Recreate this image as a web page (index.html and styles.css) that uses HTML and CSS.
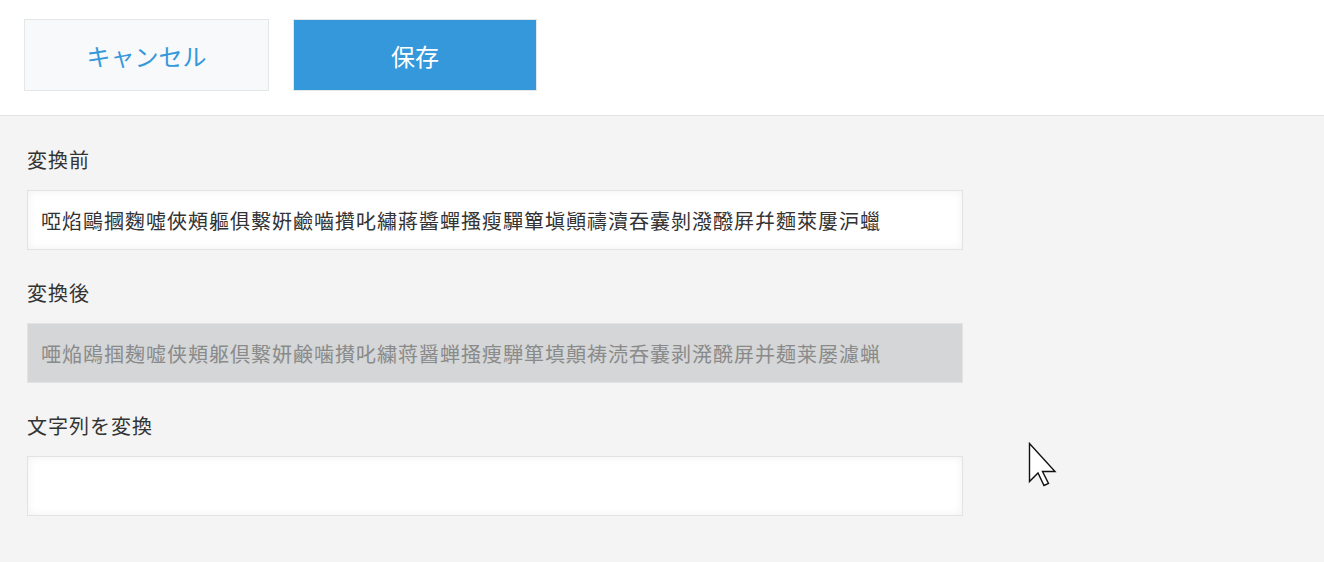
FILE: index.html
```html
<!DOCTYPE html>
<html lang="ja">
<head>
    <meta charset="UTF-8">
    <title>文字列を変換</title>
    <link rel="stylesheet" href="styles.css">
</head>
<body>
    <div class="toolbar">
        <button class="btn btn-cancel">キャンセル</button>
        <button class="btn btn-save">保存</button>
    </div>
    <div class="content">
        <div class="field">
            <label class="field-label">変換前</label>
            <input class="field-input" type="text" value="啞焰鷗摑麴噓俠頰軀俱繫姸鹼嚙攢叱繡蔣醬蟬搔瘦驒簞塡顚禱瀆吞囊剝潑醱屛幷麵萊屢沪蠟">
        </div>
        <div class="field">
            <label class="field-label">変換後</label>
            <input class="field-input" type="text" disabled value="唖焔鴎掴麹嘘侠頬躯倶繋妍鹸噛攅叱繍蒋醤蝉掻痩騨箪填顛祷涜呑嚢剥溌醗屏并麺莱屡濾蝋">
        </div>
        <div class="field field-last">
            <label class="field-label">文字列を変換</label>
            <input class="field-input" type="text" value="">
        </div>
        <svg class="cursor" width="30" height="46" viewBox="0 0 30 46">
            <path d="M1.5 1.5 L1.5 39.5 L10 31 L16 43.5 L20.5 41.5 L14.5 29.5 L27 29.5 Z" fill="#fff" stroke="#111" stroke-width="1.4" stroke-linejoin="miter"/>
        </svg>
    </div>
</body>
</html>
```

FILE: styles.css
```css
body {
    margin: 0;
    font-family: "Noto Sans CJK JP", "Noto Sans", sans-serif;
    background-color: #f4f4f4;
    color: #333;
}
.toolbar {
    display: flex;
    gap: 24px;
    padding: 19px 24px 24px;
    background: #fff;
    border-bottom: 1px solid #e3e3e3;
}
.btn {
    width: 245px;
    height: 72px;
    border: 1px solid #e3e7e8;
    font-family: inherit;
    font-size: 24px;
    cursor: pointer;
    padding: 0;
}
.btn-cancel {
    background-color: #f7f9fa;
    color: #3498db;
}
.btn-save {
    width: 244px;
    background-color: #3498db;
    color: #fff;
}
.content {
    position: relative;
    padding: 29px 27px 20px;
}
.field {
    display: flex;
    flex-direction: column;
    gap: 15px;
    margin-bottom: 28px;
}
.field-last {
    margin-top: 1px;
    margin-bottom: 0;
}
.field-label {
    font-size: 20px;
    line-height: 30px;
    letter-spacing: 1px;
    color: #333;
}
.field-input {
    box-sizing: border-box;
    width: 936px;
    height: 60px;
    padding: 0 13px;
    border: 1px solid #e3e3e3;
    background: #fff;
    box-shadow: inset 0 0 10px rgba(0, 0, 0, 0.06);
    font-family: inherit;
    font-size: 20px;
    letter-spacing: 1px;
    color: #333;
    outline: none;
}
.field-input:disabled {
    background-color: #d4d6d7;
    color: #8a8a8a;
    box-shadow: none;
}
.cursor {
    position: absolute;
    left: 1028px;
    top: 326px;
}
```
